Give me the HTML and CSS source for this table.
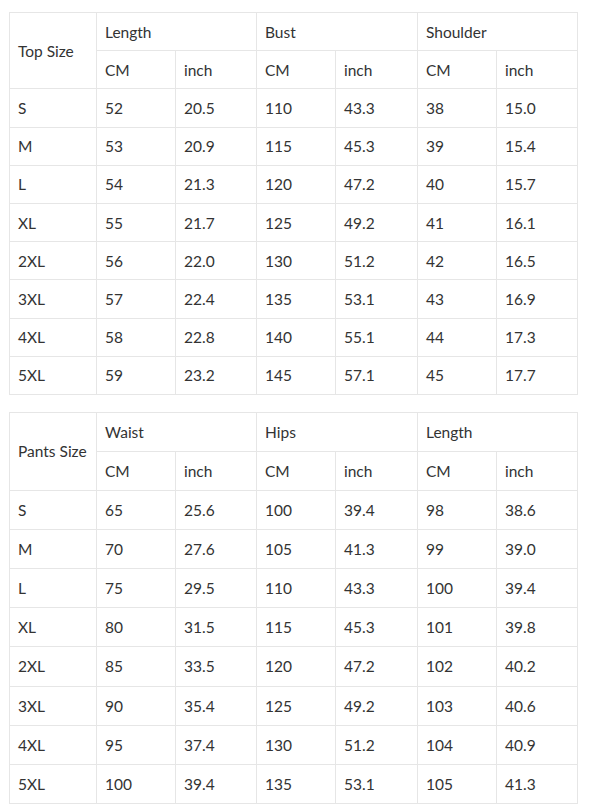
FILE: index.html
```html
<!DOCTYPE html>
<html>
<head>
<meta charset="utf-8">
<link rel="stylesheet" href="styles.css">
</head>
<body>
<div class="page">
<table class="size-table top">
  <colgroup>
    <col class="c0"><col class="c1"><col class="c2"><col class="c3"><col class="c4"><col class="c5"><col class="c6">
  </colgroup>
  <tr><td rowspan="2">Top Size</td><td colspan="2">Length</td><td colspan="2">Bust</td><td colspan="2">Shoulder</td></tr>
  <tr><td>CM</td><td>inch</td><td>CM</td><td>inch</td><td>CM</td><td>inch</td></tr>
  <tr><td>S</td><td>52</td><td>20.5</td><td>110</td><td>43.3</td><td>38</td><td>15.0</td></tr>
  <tr><td>M</td><td>53</td><td>20.9</td><td>115</td><td>45.3</td><td>39</td><td>15.4</td></tr>
  <tr><td>L</td><td>54</td><td>21.3</td><td>120</td><td>47.2</td><td>40</td><td>15.7</td></tr>
  <tr><td>XL</td><td>55</td><td>21.7</td><td>125</td><td>49.2</td><td>41</td><td>16.1</td></tr>
  <tr><td>2XL</td><td>56</td><td>22.0</td><td>130</td><td>51.2</td><td>42</td><td>16.5</td></tr>
  <tr><td>3XL</td><td>57</td><td>22.4</td><td>135</td><td>53.1</td><td>43</td><td>16.9</td></tr>
  <tr><td>4XL</td><td>58</td><td>22.8</td><td>140</td><td>55.1</td><td>44</td><td>17.3</td></tr>
  <tr><td>5XL</td><td>59</td><td>23.2</td><td>145</td><td>57.1</td><td>45</td><td>17.7</td></tr>
</table>
<table class="size-table pants">
  <colgroup>
    <col class="c0"><col class="c1"><col class="c2"><col class="c3"><col class="c4"><col class="c5"><col class="c6">
  </colgroup>
  <tr><td rowspan="2">Pants Size</td><td colspan="2">Waist</td><td colspan="2">Hips</td><td colspan="2">Length</td></tr>
  <tr><td>CM</td><td>inch</td><td>CM</td><td>inch</td><td>CM</td><td>inch</td></tr>
  <tr><td>S</td><td>65</td><td>25.6</td><td>100</td><td>39.4</td><td>98</td><td>38.6</td></tr>
  <tr><td>M</td><td>70</td><td>27.6</td><td>105</td><td>41.3</td><td>99</td><td>39.0</td></tr>
  <tr><td>L</td><td>75</td><td>29.5</td><td>110</td><td>43.3</td><td>100</td><td>39.4</td></tr>
  <tr><td>XL</td><td>80</td><td>31.5</td><td>115</td><td>45.3</td><td>101</td><td>39.8</td></tr>
  <tr><td>2XL</td><td>85</td><td>33.5</td><td>120</td><td>47.2</td><td>102</td><td>40.2</td></tr>
  <tr><td>3XL</td><td>90</td><td>35.4</td><td>125</td><td>49.2</td><td>103</td><td>40.6</td></tr>
  <tr><td>4XL</td><td>95</td><td>37.4</td><td>130</td><td>51.2</td><td>104</td><td>40.9</td></tr>
  <tr><td>5XL</td><td>100</td><td>39.4</td><td>135</td><td>53.1</td><td>105</td><td>41.3</td></tr>
</table>
</div>
</body>
</html>
```
FILE: styles.css
```css
html, body {
  margin: 0;
  padding: 0;
  background: #ffffff;
}
.page {
  padding: 12px 0 0 9px;
}
.size-table {
  border-collapse: collapse;
  table-layout: fixed;
  width: 568px;
  font-family: Lato, "Open Sans", sans-serif;
  font-size: 15.5px;
  color: #333333;
}
.size-table td {
  border: 1px solid #e6e6e6;
  padding: 0 0 0 8px;
  vertical-align: middle;
  text-align: left;
  white-space: nowrap;
}
.size-table.top td { height: 37.2px; }
.size-table.pants td { height: 38.1px; }
.size-table.pants { margin-top: 17px; }
.c0 { width: 87px; }
.c1 { width: 79px; }
.c2 { width: 81px; }
.c3 { width: 79px; }
.c4 { width: 82px; }
.c5 { width: 79px; }
.c6 { width: 81px; }
```
